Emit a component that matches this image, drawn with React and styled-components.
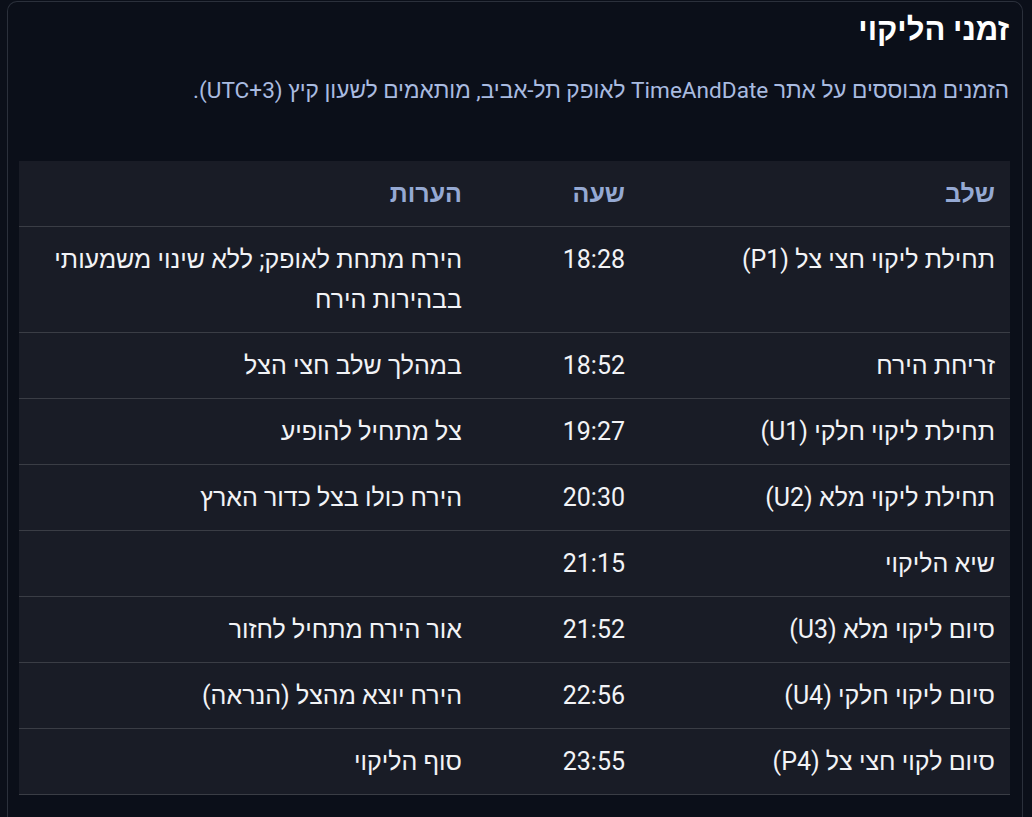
import React from 'react';
import styled, { createGlobalStyle } from 'styled-components';

const Global = createGlobalStyle`
  html, body {
    margin: 0;
    background: #0b0f19;
  }
  body {
    font-family: Roboto, "Liberation Sans", "DejaVu Sans", sans-serif;
    color: #eef0f4;
  }
`;

const Page = styled.div`
  direction: rtl;
  padding: 1px 9px 0 7px;
  height: 817px;
  box-sizing: border-box;
  overflow: hidden;
`;

const Card = styled.section`
  border: 1px solid #2b303b;
  border-bottom: none;
  border-radius: 10px 10px 0 0;
  padding: 11px 12px 40px 11px;
  min-height: 900px;
`;

const Title = styled.h2`
  margin: 0;
  padding-right: 1px;
  font-size: 31px;
  line-height: 34px;
  font-weight: 700;
  color: #ffffff;
`;

const Note = styled.p`
  margin: 30px 1px 0 0;
  font-size: 22.6px;
  line-height: 28px;
  color: #a9bbe0;
`;

const Table = styled.table`
  margin-top: 56px;
  width: 100%;
  border-collapse: collapse;
  background: #191c26;
  font-size: 25px;
`;

const HeadCell = styled.th`
  text-align: right;
  font-weight: 700;
  color: #95a9d3;
  padding: 13px 15px 12px;
  line-height: 40px;
  width: ${p => p.$w || 'auto'};
  border-bottom: 1px solid #3a3d45;
`;

const Row = styled.tr`
  border-bottom: 1px solid #3a3d45;
`;

const Cell = styled.td`
  text-align: right;
  vertical-align: top;
  padding: 13px 15px 12px;
  line-height: 40px;
  color: #f2f3f6;
`;

const rows = [
  ['תחילת ליקוי חצי צל (P1)', '18:28', 'הירח מתחת לאופק; ללא שינוי משמעותי בבהירות הירח'],
  ['זריחת הירח', '18:52', 'במהלך שלב חצי הצל'],
  ['תחילת ליקוי חלקי (U1)', '19:27', 'צל מתחיל להופיע'],
  ['תחילת ליקוי מלא (U2)', '20:30', 'הירח כולו בצל כדור הארץ'],
  ['שיא הליקוי', '21:15', ''],
  ['סיום ליקוי מלא (U3)', '21:52', 'אור הירח מתחיל לחזור'],
  ['סיום ליקוי חלקי (U4)', '22:56', 'הירח יוצא מהצל (הנראה)'],
  ['סיום לקוי חצי צל (P4)', '23:55', 'סוף הליקוי'],
];

export default function App() {
  return (
    <Page>
      <Global />
      <Card>
        <Title>זמני הליקוי</Title>
        <Note>הזמנים מבוססים על אתר TimeAndDate לאופק תל-אביב, מותאמים לשעון קיץ (UTC+3).</Note>
        <Table>
          <thead>
            <tr>
              <HeadCell $w="340px">שלב</HeadCell>
              <HeadCell $w="133px">שעה</HeadCell>
              <HeadCell>הערות</HeadCell>
            </tr>
          </thead>
          <tbody>
            {rows.map(r => (
              <Row key={r[1]}>
                <Cell>{r[0]}</Cell>
                <Cell>{r[1]}</Cell>
                <Cell>{r[2]}</Cell>
              </Row>
            ))}
          </tbody>
        </Table>
      </Card>
    </Page>
  );
}
